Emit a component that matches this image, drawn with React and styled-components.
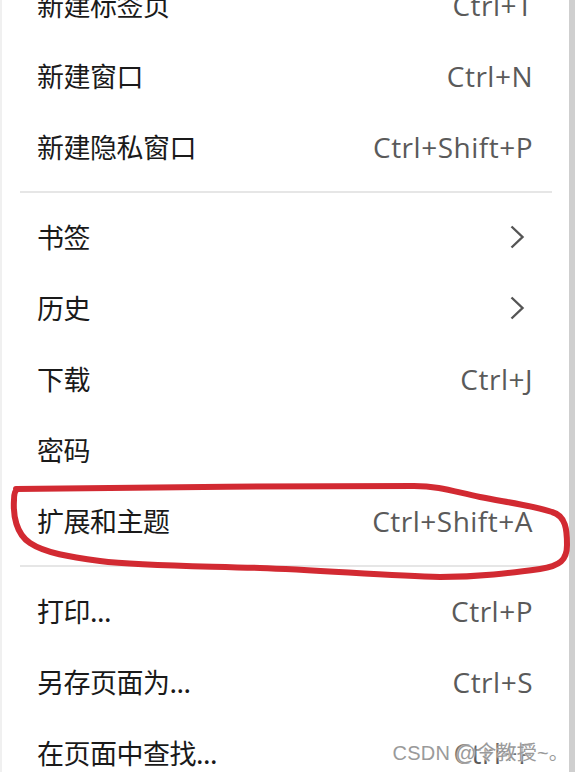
import React from 'react';
import styled, { createGlobalStyle } from 'styled-components';

const Global = createGlobalStyle`
  html, body {
    margin: 0;
    padding: 0;
    background: #cfcfcf;
    overflow: hidden;
  }
`;

const Page = styled.div`
  position: relative;
  width: 575px;
  height: 772px;
  overflow: hidden;
  display: flex;
`;

const Menu = styled.div`
  width: 569px;
  height: 772px;
  background: #fff;
  border-left: 2px solid #f0f0f0;
  box-sizing: border-box;
  display: flex;
  flex-direction: column;
  overflow: hidden;
`;

const List = styled.div`
  margin-top: -31px;
  display: flex;
  flex-direction: column;
`;

const Row = styled.div`
  height: 71px;
  flex-shrink: 0;
  display: flex;
  align-items: center;
  justify-content: space-between;
  padding: 0 36px 0 35px;
`;

const Label = styled.span`
  font-family: "Noto Sans CJK SC", "Noto Sans", sans-serif;
  font-size: 27px;
  color: #1a1a1a;
  letter-spacing: -0.5px;
`;

const Shortcut = styled.span`
  font-family: "Open Sans", "Noto Sans", sans-serif;
  font-size: 28px;
  color: #5a5a5a;
  letter-spacing: 0.5px;
`;

const Divider = styled.div`
  height: 2px;
  flex-shrink: 0;
  background: #e6e6e6;
  margin: 9px 17px 8px 18px;
`;

const Chevron = styled.svg`
  width: 16px;
  height: 24px;
  margin-right: 8px;
`;

const Annotation = styled.svg`
  position: absolute;
  left: 0;
  top: 0;
  pointer-events: none;
`;

const Watermark = styled.div`
  position: absolute;
  right: 6px;
  bottom: 6px;
  font-family: "Liberation Sans", "Noto Sans CJK SC", sans-serif;
  font-size: 20px;
  color: #9a9a9a;
  text-shadow: 0 0 2px #fff, 0 0 3px #fff;
  letter-spacing: 0.2px;
`;

const Arrow = () => (
  <Chevron viewBox="0 0 16 24">
    <path d="M2.5 1.5 L13.5 12 L2.5 22.5" fill="none" stroke="#555" strokeWidth="2.4" />
  </Chevron>
);

const groups = [
  [
    { label: '新建标签页', key: 'Ctrl+T' },
    { label: '新建窗口', key: 'Ctrl+N' },
    { label: '新建隐私窗口', key: 'Ctrl+Shift+P' },
  ],
  [
    { label: '书签', sub: true },
    { label: '历史', sub: true },
    { label: '下载', key: 'Ctrl+J' },
    { label: '密码' },
    { label: '扩展和主题', key: 'Ctrl+Shift+A' },
  ],
  [
    { label: '打印...', key: 'Ctrl+P' },
    { label: '另存页面为...', key: 'Ctrl+S' },
    { label: '在页面中查找...', key: 'Ctrl+F' },
  ],
];

const App = () => (
  <Page>
    <Global />
    <Menu>
      <List>
        {groups.map((items, gi) => (
          <React.Fragment key={gi}>
            {gi > 0 && <Divider />}
            {items.map((it) => (
              <Row key={it.label}>
                <Label>{it.label}</Label>
                {it.sub ? <Arrow /> : it.key ? <Shortcut>{it.key}</Shortcut> : null}
              </Row>
            ))}
          </React.Fragment>
        ))}
      </List>
    </Menu>
    <Annotation width="575" height="772" viewBox="0 0 575 772">
      <path
        d="M16 489 C120 487 300 486 414 486 C440 486 455 492 480 497 C505 502 530 505 552 512 C566 516 567 530 567 545 C567 560 560 566 540 569 C510 573 480 577 440 577 C390 576 320 570 260 568 C200 566 140 566 100 561 C70 557 45 553 30 543 C16 534 13 515 14 500 C14 493 15 490 18 489"
        fill="none"
        stroke="#d22a32"
        strokeWidth="6"
        strokeLinecap="round"
        strokeLinejoin="round"
      />
    </Annotation>
    <Watermark>CSDN @令教授~。</Watermark>
  </Page>
);

export default App;
